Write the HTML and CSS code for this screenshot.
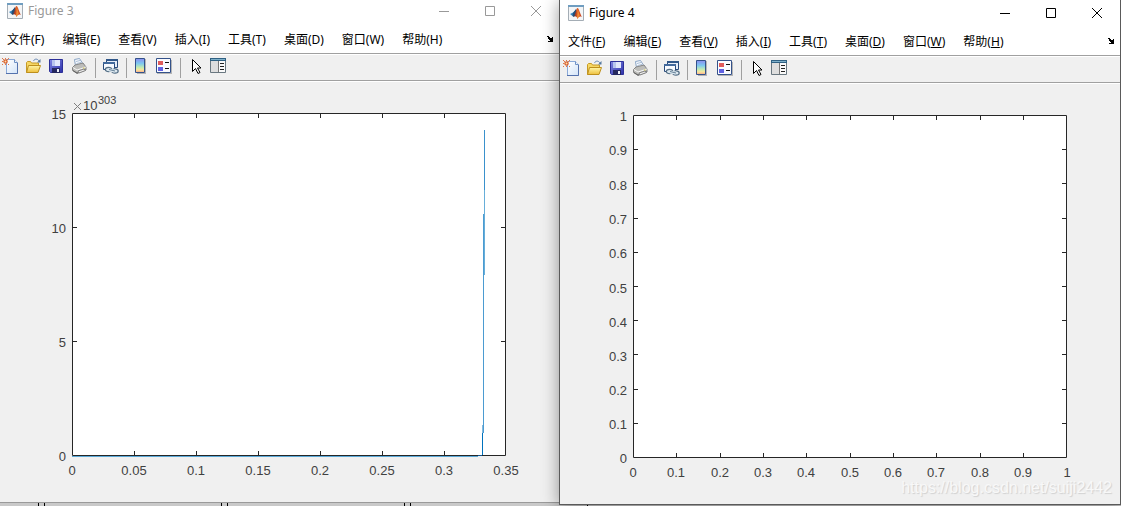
FILE: index.html
```html
<!DOCTYPE html>
<html lang="zh-CN">
<head>
<meta charset="utf-8">
<title>Figures</title>
<link rel="stylesheet" href="styles.css">
</head>
<body>
<svg class="sprite" aria-hidden="true">
  <defs>
    <linearGradient id="paper" x1="0" y1="0" x2="1" y2="1"><stop offset="0" stop-color="#fff"/><stop offset="1" stop-color="#d3e4f8"/></linearGradient>
    <linearGradient id="gold" x1="0" y1="0" x2="0" y2="1"><stop offset="0" stop-color="#fff6a8"/><stop offset="1" stop-color="#eebf3c"/></linearGradient>
    <linearGradient id="disk" x1="0" y1="0" x2="1" y2="1"><stop offset="0" stop-color="#8288e4"/><stop offset="1" stop-color="#2b2fa8"/></linearGradient>
    <linearGradient id="spectrum" x1="0" y1="0" x2="0" y2="1"><stop offset="0" stop-color="#8c8cf0"/><stop offset=".35" stop-color="#7cc8f0"/><stop offset=".65" stop-color="#c4ecb0"/><stop offset=".82" stop-color="#fbe59a"/><stop offset="1" stop-color="#f5a48c"/></linearGradient>
    <linearGradient id="flame" x1="0" y1="0" x2="1" y2="0"><stop offset="0" stop-color="#8a2418"/><stop offset=".5" stop-color="#e0622a"/><stop offset="1" stop-color="#c03818"/></linearGradient>
  </defs>
  <symbol id="i-matlab" viewBox="0 0 16 16">
    <path d="M.5.5h15v15H.5z" fill="#f3f5f7" stroke="#a4adb5"/><path d="M0 0h16v2H0z" fill="#6f9dc0"/>
    <path d="M2 9l3-1.500L8 5l-1.500 5L4.500 11z" fill="#3585bd"/><path d="M5 8l3-4 1 3-2 4-1.500 1-1-1z" fill="#264d75"/>
    <path d="M6 11.500C8 9 8 3 9.500 3S12 9 14 12c-2-1-3-.5-4.500 2C9 12 8 11 6 11.500z" fill="url(#flame)"/><path d="M9.500 4c.2 3 .3 5-.5 9l.7.5c1-2 1.300-2.500 2-3z" fill="#ef8e32"/>
  </symbol>
  <symbol id="i-new" viewBox="0 0 16 16">
    <path d="M4.500 1.500h8l3 3v11h-11z" fill="url(#paper)" stroke="#8aa9d8"/><path d="M12.500 1.500v3h3" fill="#edf4fc" stroke="#6e91c5"/><path d="M15.500 5v10.500H4" fill="none" stroke="#5472ad"/>
    <path d="M0 0h1v1H0zM3 0h1v1H3zM6 0h1v1H6zM0 6h1v1H0zM3 6h1v1H3zM6 6h1v1H6zM0 3h1v1H0zM1 1h1v1H1zM5 1h1v1H5z" fill="#df784b"/><circle cx="3.500" cy="3.500" r="1.600" fill="#ffe0a8" stroke="#d9602e" stroke-width="1.300"/>
  </symbol>
  <symbol id="i-open" viewBox="0 0 16 16">
    <path d="M1.500 14.500v-10l1-1h3l1 1.500h7v3" fill="#f6d764" stroke="#c69a26"/><path d="M1.500 14.500l2-7h12l-2.500 7z" fill="url(#gold)" stroke="#bd8f1d"/>
    <path d="M8.500 3c1-2.500 4-2.500 5.500 0" fill="none" stroke="#6889b5"/><path d="M15.500 1v3.500H12z" fill="#54789f"/>
  </symbol>
  <symbol id="i-save" viewBox="0 0 16 16">
    <path d="M1.500 1.500h13v13h-12l-1-1z" fill="url(#disk)" stroke="#2d3099"/><path d="M4 2h8v6H4z" fill="#e2e8fb"/><path d="M4 2h3v6H4z" fill="#b8c5ee"/><path d="M4 10h8v5H4z" fill="#25285f"/><path d="M9 11h2v3H9z" fill="#eef0fa"/>
  </symbol>
  <symbol id="i-print" viewBox="0 0 16 16">
    <path d="M4.500 8L3.500 1.500l5-1L12 6v2" fill="#f8fbff" stroke="#89a4c5"/><path d="M5 3.500l4-1M5.500 5.500l4.500-1" stroke="#a9bdd6"/>
    <path d="M1.500 9.500L4 7l8-2 3 4v3l-9 3.500-4.500-3z" fill="#bdbdba" stroke="#848484"/><path d="M2 9.500l4 2.500 9-3" fill="none" stroke="#f5f5f5"/><path d="M2 12.500l4 2.500 8.500-3" fill="none" stroke="#626262"/><path d="M7 13l6-2 1.500 1.500L8 15z" fill="#ececec" stroke="#858585"/><path d="M12 9.500h1.500v1H12z" fill="#d3c54a"/>
  </symbol>
  <symbol id="i-link" viewBox="0 0 17 16">
    <path d="M4.500 1.500h11v8h-11z" fill="#e7eef9" stroke="#294b7c"/><path d="M4 1h12v2H4z" fill="#315789"/><path d="M1.500 4.500h11v7h-11z" fill="#f7faff" stroke="#294b7c"/><path d="M1 4h12v2H1z" fill="#42699c"/>
    <g fill="#dbe7ef" stroke="#567087" stroke-width="1.200"><ellipse cx="6.500" cy="11.500" rx="3.200" ry="2.200"/><ellipse cx="13" cy="13" rx="3.200" ry="2.200"/></g><path d="M7 12l6 1" stroke="#dbe7ef" stroke-width="3"/><path d="M7 11.500l6 1.500" stroke="#647f96"/>
  </symbol>
  <symbol id="i-colorbar" viewBox="0 0 16 16">
    <path d="M12 1h1v15H4v-1h8z" fill="#b5b5b5"/><path d="M2.500.5h9v14h-9z" fill="url(#spectrum)" stroke="#34528a"/>
  </symbol>
  <symbol id="i-legend" viewBox="0 0 16 16">
    <path d="M15 2h1v14H1v-1h14z" fill="#b5b5b5"/><path d="M.5.5h14v14H.5z" fill="#fafbff" stroke="#34528a"/><path d="M2 3h5v4H2z" fill="#e05b5b"/><path d="M2 9h5v4H2z" fill="#6262e2"/><path d="M9 4h4v1H9zM9 10h4v1H9z" fill="#111"/>
  </symbol>
  <symbol id="i-pointer" viewBox="0 0 16 16">
    <path d="M5.500 1.500v12l3-3 2.500 5 2-1-2.500-4.500h3.500z" fill="#fff" stroke="#000"/>
  </symbol>
  <symbol id="i-inspect" viewBox="0 0 16 16">
    <path d="M.5.5h15v14H.5z" fill="#ececec" stroke="#697780"/><path d="M0 0h16v3H0z" fill="#306183"/><path d="M1 1h14v1H1z" fill="#7eb0ca"/><path d="M1 3h7v11H1z" fill="#dedede"/><path d="M8 3h1v11H8z" fill="#777"/><path d="M9 3h6v11H9z" fill="#fafafa"/><path d="M10 5h4v1h-4zM10 8h4v1h-4zM10 11h4v1h-4z" fill="#222"/>
  </symbol>
  <symbol id="i-min" viewBox="0 0 10 10"><path d="M0 5h10v1H0z" fill="currentColor"/></symbol>
  <symbol id="i-max" viewBox="0 0 10 10"><path d="M.5.5h9v9h-9z" fill="none" stroke="currentColor"/></symbol>
  <symbol id="i-close" viewBox="0 0 10 10"><path d="M0 0l10 10M10 0l-10 10" stroke="currentColor"/></symbol>
  <symbol id="i-dock" viewBox="0 0 8 7"><path d="M0 1h1V0h2v1h1v1h2V1h1v5H2V5h2V4H3V3H2V1z" fill="#000"/></symbol>
</svg>

<main class="desktop">
  <section class="window inactive" aria-label="Figure 3">
    <header class="titlebar">
      <svg class="app"><use href="#i-matlab"/></svg>
      <h1 class="title">Figure 3</h1>
      <button class="control" aria-label="最小化"><svg><use href="#i-min"/></svg></button>
      <button class="control" aria-label="最大化"><svg><use href="#i-max"/></svg></button>
      <button class="control" aria-label="关闭"><svg><use href="#i-close"/></svg></button>
    </header>
    <nav class="menubar">
      <button>文件(F)</button><button>编辑(E)</button><button>查看(V)</button><button>插入(I)</button><button>工具(T)</button><button>桌面(D)</button><button>窗口(W)</button><button>帮助(H)</button>
      <button class="dock" aria-label="停靠"><svg><use href="#i-dock"/></svg></button>
    </nav>
    <div class="toolbar">
      <button aria-label="新建"><svg><use href="#i-new"/></svg></button>
      <button aria-label="打开"><svg><use href="#i-open"/></svg></button>
      <button aria-label="保存"><svg><use href="#i-save"/></svg></button>
      <button aria-label="打印"><svg><use href="#i-print"/></svg></button>
      <span class="sep"></span>
      <button aria-label="链接绘图"><svg class="wide"><use href="#i-link"/></svg></button>
      <span class="sep"></span>
      <button aria-label="颜色栏"><svg><use href="#i-colorbar"/></svg></button>
      <button aria-label="图例"><svg><use href="#i-legend"/></svg></button>
      <span class="sep"></span>
      <button aria-label="编辑绘图"><svg><use href="#i-pointer"/></svg></button>
      <button aria-label="属性检查器"><svg><use href="#i-inspect"/></svg></button>
    </div>
    <svg class="plot" viewBox="0 0 560 421" role="img" aria-label="Figure 3 plot">
      <path class="axes" d="M73.500 32.500h433v342h-433z"/>
      <path class="ticks" d="M135.500 374v-4M197.500 374v-4M259.500 374v-4M321.500 374v-4M383.500 374v-4M445.500 374v-4M135.500 33v4M197.500 33v4M259.500 33v4M321.500 33v4M383.500 33v4M445.500 33v4M74 260.500h4M74 146.500h4M506 260.500h-4M506 146.500h-4"/>
      <g>
        <path d="M73 375h406v1H73z" fill="#5aa9d8"/>
        <path d="M479 374h4v1h-4z" fill="#0f548f"/>
        <path d="M483 352h1v22h-1z" fill="#0072bd"/>
        <path d="M483 344h1v8h-1z" fill="#84b9de"/>
        <path d="M484 133h1v219h-1z" fill="#4b9bd1"/>
        <path d="M485 49h1v60h-1z" fill="#3a91cc"/>
        <path d="M485 109h1v85h-1z" fill="#67aed9"/>
      </g>
      <g class="ylabels"><text x="67" y="38">15</text><text x="67" y="152">10</text><text x="67" y="266">5</text><text x="67" y="380">0</text></g>
      <g class="xlabels"><text x="73" y="394">0</text><text x="135" y="394">0.05</text><text x="197" y="394">0.1</text><text x="259" y="394">0.15</text><text x="321" y="394">0.2</text><text x="383" y="394">0.25</text><text x="445" y="394">0.3</text><text x="507" y="394">0.35</text></g>
      <path class="times" d="M75 22l7 7M82 22l-7 7"/>
      <text x="84" y="29">10</text><text class="exponent" x="99" y="23">303</text>
    </svg>
  </section>

  <section class="window active" aria-label="Figure 4">
    <header class="titlebar">
      <svg class="app"><use href="#i-matlab"/></svg>
      <h1 class="title">Figure 4</h1>
      <button class="control" aria-label="最小化"><svg><use href="#i-min"/></svg></button>
      <button class="control" aria-label="最大化"><svg><use href="#i-max"/></svg></button>
      <button class="control" aria-label="关闭"><svg><use href="#i-close"/></svg></button>
    </header>
    <nav class="menubar">
      <button>文件(<u>F</u>)</button><button>编辑(<u>E</u>)</button><button>查看(<u>V</u>)</button><button>插入(<u>I</u>)</button><button>工具(<u>T</u>)</button><button>桌面(<u>D</u>)</button><button>窗口(<u>W</u>)</button><button>帮助(<u>H</u>)</button>
      <button class="dock" aria-label="停靠"><svg><use href="#i-dock"/></svg></button>
    </nav>
    <div class="toolbar">
      <button aria-label="新建"><svg><use href="#i-new"/></svg></button>
      <button aria-label="打开"><svg><use href="#i-open"/></svg></button>
      <button aria-label="保存"><svg><use href="#i-save"/></svg></button>
      <button aria-label="打印"><svg><use href="#i-print"/></svg></button>
      <span class="sep"></span>
      <button aria-label="链接绘图"><svg class="wide"><use href="#i-link"/></svg></button>
      <span class="sep"></span>
      <button aria-label="颜色栏"><svg><use href="#i-colorbar"/></svg></button>
      <button aria-label="图例"><svg><use href="#i-legend"/></svg></button>
      <span class="sep"></span>
      <button aria-label="编辑绘图"><svg><use href="#i-pointer"/></svg></button>
      <button aria-label="属性检查器"><svg><use href="#i-inspect"/></svg></button>
    </div>
    <svg class="plot" viewBox="0 0 560 421" role="img" aria-label="Figure 4 plot">
      <path class="axes" d="M73.500 32.500h433v342h-433z"/>
      <path class="ticks" d="M116.500 374v-4M160.500 374v-4M203.500 374v-4M246.500 374v-4M290.500 374v-4M333.500 374v-4M376.500 374v-4M420.500 374v-4M463.500 374v-4M116.500 33v4M160.500 33v4M203.500 33v4M246.500 33v4M290.500 33v4M333.500 33v4M376.500 33v4M420.500 33v4M463.500 33v4M74 66.500h4M74 100.500h4M74 135.500h4M74 169.500h4M74 203.500h4M74 237.500h4M74 271.500h4M74 306.500h4M74 340.500h4M506 66.500h-4M506 100.500h-4M506 135.500h-4M506 169.500h-4M506 203.500h-4M506 237.500h-4M506 271.500h-4M506 306.500h-4M506 340.500h-4"/>
      <g class="ylabels"><text x="67" y="38">1</text><text x="67" y="72">0.9</text><text x="67" y="107">0.8</text><text x="67" y="141">0.7</text><text x="67" y="175">0.6</text><text x="67" y="210">0.5</text><text x="67" y="244">0.4</text><text x="67" y="278">0.3</text><text x="67" y="312">0.2</text><text x="67" y="346">0.1</text><text x="67" y="380">0</text></g>
      <g class="xlabels"><text x="73" y="394">0</text><text x="116" y="394">0.1</text><text x="160" y="394">0.2</text><text x="203" y="394">0.3</text><text x="246" y="394">0.4</text><text x="290" y="394">0.5</text><text x="333" y="394">0.6</text><text x="376" y="394">0.7</text><text x="420" y="394">0.8</text><text x="463" y="394">0.9</text><text x="507" y="394">1</text></g>
    </svg>
    <p class="watermark">https://blog.csdn.net/suiji2442</p>
  </section>
</main>
</body>
</html>
```
FILE: styles.css
```css
* { box-sizing: border-box; }

body {
  margin: 0;
  background: #c9c9c9;
  font: 12px/16px "Noto Sans", "Noto Sans CJK SC", sans-serif;
  color: #000;
}

.sprite { position: absolute; width: 0; height: 0; }

.desktop {
  display: grid;
  grid-template-columns: 559fr 562fr;
  align-items: start;
  min-height: 100vh;
  overflow: hidden;
  background:
    linear-gradient(#000, #000) 38px 0 / 1px 100% no-repeat,
    linear-gradient(#000, #000) 44px 0 / 1px 100% no-repeat,
    linear-gradient(#000, #000) 221px 0 / 1px 100% no-repeat,
    linear-gradient(#000, #000) 227px 0 / 1px 100% no-repeat,
    linear-gradient(#000, #000) 404px 0 / 1px 100% no-repeat,
    linear-gradient(#000, #000) 410px 0 / 1px 100% no-repeat,
    linear-gradient(#000, #000) 587px 0 / 1px 100% no-repeat,
    #c9c9c9;
}

.window {
  position: relative;
  background: #f0f0f0;
}

.inactive {
  margin-left: -1px;
  border-bottom: 1px solid #9a9a9a;
}

.active {
  border: solid #5a5a5a;
  border-width: 0 1px 1px;
  box-shadow: 0 2px 16px rgba(0, 0, 0, .4);
}

button {
  margin: 0;
  padding: 0;
  border: 0;
  background: none;
  font: inherit;
  color: inherit;
}

.titlebar {
  display: flex;
  align-items: center;
  height: 24px;
  padding: 0 0 2px 8px;
  background: #fff;
}

.active .titlebar { height: 26px; padding: 2px 0 2px 8px; }

.app { width: 16px; height: 16px; }

.title {
  flex: 1;
  margin: 0 0 0 5px;
  font-size: 12px;
  font-weight: 400;
}

.inactive .titlebar { color: #999; }

.control {
  display: flex;
  align-items: center;
  justify-content: center;
  width: 46px;
  height: 22px;
}

.control svg { width: 10px; height: 10px; }

.menubar {
  display: flex;
  align-items: center;
  gap: 18px;
  height: 30px;
  padding: 2px 5px 0 8px;
  border-bottom: 1px solid #a0a0a0;
  background: #fff;
}

.menubar u { text-underline-offset: 1px; }

.dock { display: flex; margin-left: auto; }
.dock svg { width: 8px; height: 7px; }

.toolbar {
  display: flex;
  height: 27px;
  border-top: 1px solid #fff;
  border-bottom: 1px solid #a0a0a0;
  box-shadow: 0 1px #fff;
}

.toolbar button {
  display: flex;
  width: 23px;
  padding: 3px;
}

.toolbar svg { flex: none; width: 16px; height: 16px; }
.toolbar .wide { width: 17px; }

.sep {
  width: 8px;
  margin: 3px 0 2px;
  background: linear-gradient(#a0a0a0, #a0a0a0) 4px 0 / 1px 100% no-repeat;
}

.plot {
  display: block;
  width: 100%;
  font: 13px "Liberation Sans", Arial, sans-serif;
  fill: #404040;
}

.axes { fill: #fff; stroke: #262626; }
.ticks { fill: none; stroke: #262626; }
.times { fill: none; stroke: #808080; }
.exponent { font-size: 11px; }
.ylabels { text-anchor: end; }
.xlabels { text-anchor: middle; }

.watermark {
  position: absolute;
  right: 8px;
  bottom: 6px;
  margin: 0;
  font: 16px/20px "Liberation Sans", Arial, sans-serif;
  color: #f8f8f8;
  text-shadow: 1px 1px 1px #d0d0d0;
}
```
